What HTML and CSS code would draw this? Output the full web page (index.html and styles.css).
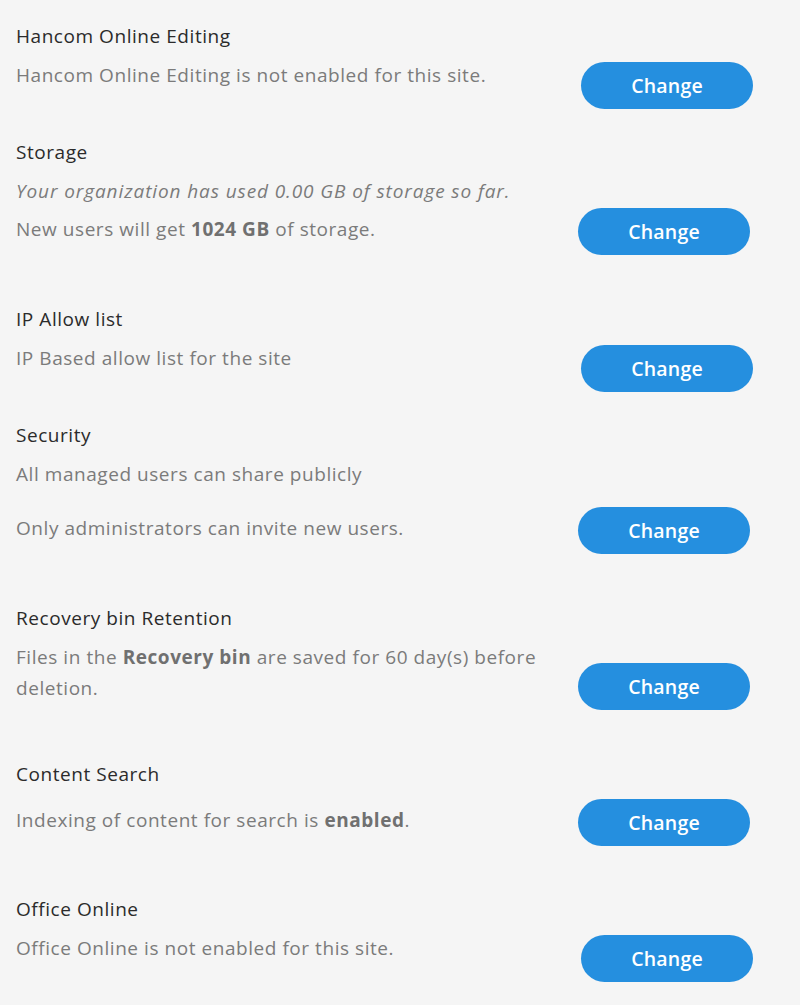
FILE: index.html
```html
<!DOCTYPE html>
<html>
<head>
<meta charset="utf-8">
<link rel="stylesheet" href="styles.css">
</head>
<body>
<main class="settings">
  <section class="setting setting--a">
    <div class="info">
      <h3 class="title">Hancom Online Editing</h3>
      <p class="desc">Hancom Online Editing is not enabled for this site.</p>
    </div>
    <button class="change">Change</button>
  </section>

  <section class="setting setting--b">
    <div class="info">
      <h3 class="title">Storage</h3>
      <p class="desc desc--italic">Your organization has used 0.00 GB of storage so far.</p>
      <p class="desc desc--next">New users will get <b>1024 GB</b> of storage.</p>
    </div>
    <button class="change">Change</button>
  </section>

  <section class="setting setting--a">
    <div class="info">
      <h3 class="title">IP Allow list</h3>
      <p class="desc">IP Based allow list for the site</p>
    </div>
    <button class="change">Change</button>
  </section>

  <section class="setting setting--b">
    <div class="info">
      <h3 class="title">Security</h3>
      <p class="desc">All managed users can share publicly</p>
      <p class="desc desc--spaced">Only administrators can invite new users.</p>
    </div>
    <button class="change">Change</button>
  </section>

  <section class="setting setting--b setting--tight">
    <div class="info">
      <h3 class="title">Recovery bin Retention</h3>
      <p class="desc">Files in the <b>Recovery bin</b> are saved for 60 day(s) before deletion.</p>
    </div>
    <button class="change">Change</button>
  </section>

  <section class="setting setting--b setting--short">
    <div class="info">
      <h3 class="title">Content Search</h3>
      <p class="desc desc--search">Indexing of content for search is <b>enabled</b>.</p>
    </div>
    <button class="change">Change</button>
  </section>

  <section class="setting setting--a">
    <div class="info">
      <h3 class="title">Office Online</h3>
      <p class="desc">Office Online is not enabled for this site.</p>
    </div>
    <button class="change">Change</button>
  </section>
</main>
</body>
</html>
```

FILE: styles.css
```css
html, body {
  margin: 0;
  padding: 0;
  background: #f5f5f5;
}

body {
  font-family: "Open Sans", "Noto Sans", "Liberation Sans", sans-serif;
  color: #7b7b7b;
}

.settings {
  display: flex;
  flex-direction: column;
  padding: 24px 0 0 16px;
}

.setting {
  display: flex;
  align-items: flex-end;
}

.setting--a {
  width: 737px;
  margin-bottom: 31px;
}

.setting--b {
  width: 734px;
  margin-bottom: 52px;
}

.setting--short {
  margin-bottom: 51px;
}

.info {
  flex: 1;
  min-width: 0;
  padding-right: 16px;
}

.setting--a .info {
  padding-bottom: 18px;
}

.setting--b .info {
  padding-bottom: 10px;
}

.setting--tight .info {
  padding-bottom: 6px;
}

.title {
  margin: 0 0 12px;
  font-size: 19px;
  line-height: 24px;
  letter-spacing: 0.55px;
  font-weight: 400;
  color: #2b2b2b;
}

.desc {
  margin: 0;
  font-size: 19px;
  line-height: 31px;
  letter-spacing: 0.55px;
  color: #7b7b7b;
}

.desc b {
  font-weight: 700;
  color: #707070;
}

.desc--italic {
  font-style: italic;
  letter-spacing: 0.9px;
}

.desc--next {
  margin-top: 7px;
}

.desc--spaced {
  margin-top: 23px;
}

.desc--search {
  margin-top: 19px;
}

.change {
  flex: none;
  width: 172px;
  height: 47px;
  border: none;
  border-radius: 24px;
  background: #258fdf;
  color: #ffffff;
  font-family: "Open Sans", "Noto Sans", sans-serif;
  font-size: 19.5px;
  letter-spacing: 0.2px;
  font-weight: 600;
  padding: 0;
  cursor: pointer;
}
```
